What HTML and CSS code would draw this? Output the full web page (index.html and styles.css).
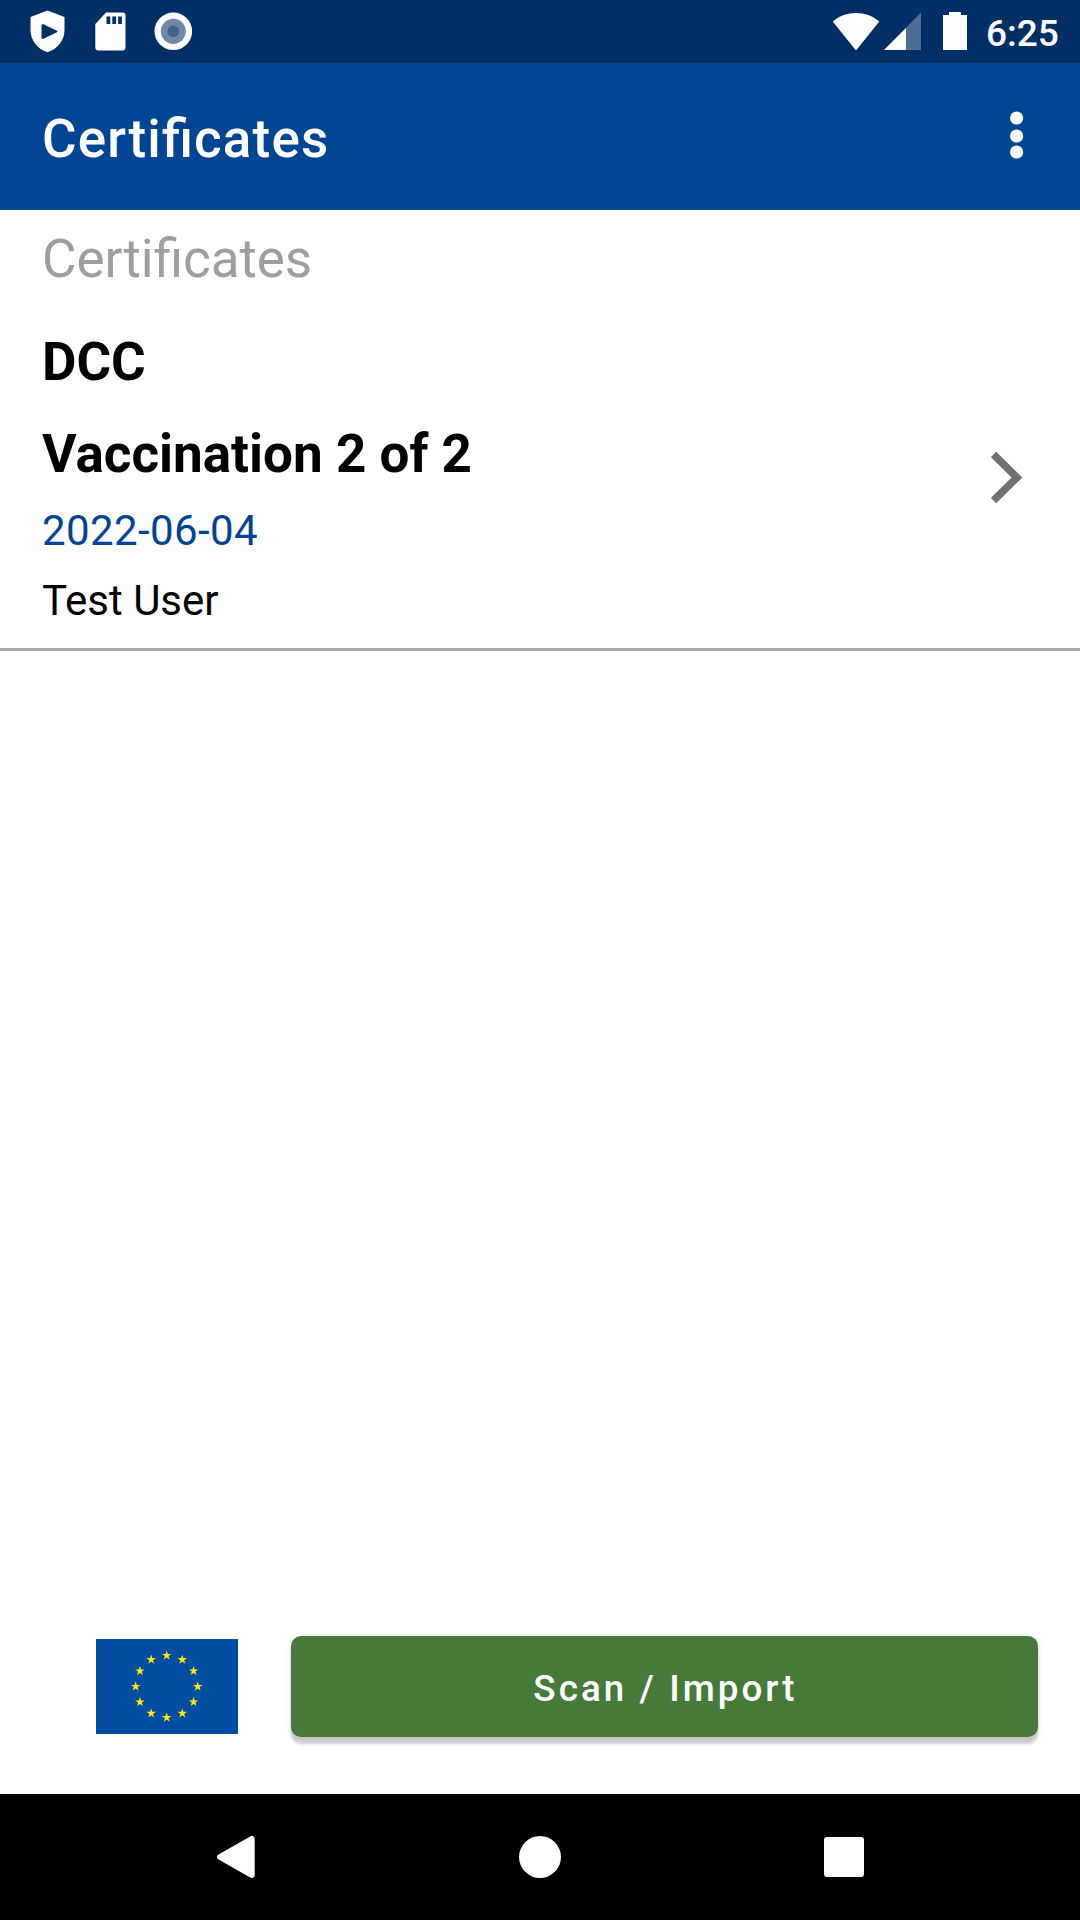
FILE: index.html
```html
<!DOCTYPE html>
<html lang="en">
<head>
<meta charset="utf-8">
<title>Certificates</title>
<link rel="stylesheet" href="styles.css">
</head>
<body>
<div class="screen">
  <header class="status-bar">
    <svg class="status-left" width="200" height="63" viewBox="0 0 200 63" fill="#fff">
      <path fill-rule="evenodd" d="M47.500 10.500L64.500 17V30C64.500 40.500 57.500 49 47.500 52.300C37.500 49 30.500 40.500 30.500 30V17ZM43 24Q41.500 24 41.500 25.500V37.500Q41.500 39 43 39L57 32.300Q58 31.500 57 30.700Z"/>
      <path fill-rule="evenodd" d="M106 12.500H122.500Q125.500 12.500 125.500 15.500V47.500Q125.500 50.500 122.500 50.500H98.500Q95.300 50.500 95.300 47.500V24ZM106.500 16.500V24H110.300V16.500ZM112.300 16.500V24H116.100V16.500ZM118.100 16.500V24H121.900V16.500Z"/>
      <circle cx="173.300" cy="31.300" r="18.800"/>
      <circle cx="173.300" cy="31.300" r="12.500" fill="#6e88a9"/>
      <circle cx="173.300" cy="31.300" r="5.800" fill="#40628d"/>
    </svg>
    <div class="status-right">
      <svg width="140" height="63" viewBox="0 0 140 63" fill="#fff">
        <path d="M4.700 21.500C18 10.300 38 10.300 51.300 21.500L28 50.500Z"/>
        <path d="M93 12.500V50H56Z" fill="#4d6e95"/>
        <path d="M78 28V50H56Z"/>
        <path d="M121 12H133V15H139V50H115V15H121Z"/>
      </svg>
      <span class="clock">6:25</span>
    </div>
  </header>
  <div class="app-bar">
    <h1 class="app-title">Certificates</h1>
    <svg class="menu" width="14" height="50" viewBox="0 0 14 50" fill="#fff">
      <circle cx="6.600" cy="7" r="6.600"/>
      <circle cx="6.600" cy="25" r="6.600"/>
      <circle cx="6.600" cy="41" r="6.600"/>
    </svg>
  </div>
  <main class="content">
    <h2 class="section">Certificates</h2>
    <article class="certificate">
      <div class="details">
        <div class="heading">DCC</div>
        <div class="heading dose">Vaccination 2 of 2</div>
        <div class="line date">2022-06-04</div>
        <div class="line name">Test User</div>
      </div>
      <svg class="chevron" width="34" height="54" viewBox="0 0 34 54">
        <path d="M2.500 3.500L26 26.500L2.500 49.500" fill="none" stroke="#717171" stroke-width="7.600"/>
      </svg>
    </article>
  </main>
  <footer class="actions">
    <svg class="flag" width="142" height="95" viewBox="0 0 142 95">
      <defs><path id="star" fill="#ffed00" d="M0 -5L1.120 -1.540H4.760L1.820 .590L2.940 4.050L0 1.910L-2.940 4.050L-1.820 .590L-4.760 -1.540H-1.120Z"/></defs>
      <rect width="142" height="95" fill="#034ea2"/>
      <use href="#star" x="70.700" y="16.500"/>
      <use href="#star" x="86.300" y="20.600"/>
      <use href="#star" x="97.600" y="32"/>
      <use href="#star" x="101.700" y="47.500"/>
      <use href="#star" x="97.600" y="63"/>
      <use href="#star" x="86.300" y="74.400"/>
      <use href="#star" x="70.700" y="78.600"/>
      <use href="#star" x="55.200" y="74.400"/>
      <use href="#star" x="43.900" y="63"/>
      <use href="#star" x="39.700" y="47.500"/>
      <use href="#star" x="43.900" y="32"/>
      <use href="#star" x="55.200" y="20.600"/>
    </svg>
    <button class="scan" type="button">Scan / Import</button>
  </footer>
  <nav class="nav-bar">
    <svg width="39" height="44" viewBox="0 0 39 44"><path d="M3 22L34.700 4V40Z" fill="#fff" stroke="#fff" stroke-width="6" stroke-linejoin="round"/></svg>
    <svg width="42" height="42" viewBox="0 0 42 42"><circle cx="21" cy="21" r="21" fill="#fff"/></svg>
    <svg width="40" height="40" viewBox="0 0 40 40"><rect width="40" height="40" rx="3" fill="#fff"/></svg>
  </nav>
</div>
</body>
</html>
```
FILE: styles.css
```css
* { box-sizing: border-box; }
body { margin: 0; font-family: Roboto, sans-serif; background: #fff; }
svg { display: block; flex: none; }
h1, h2 { margin: 0; }

.screen { width: 1080px; height: 1920px; display: flex; flex-direction: column; background: #fff; }

.status-bar { height: 63px; display: flex; justify-content: space-between; background: #002f66; }
.status-right { width: 252px; display: flex; padding-right: 12px; }
.clock { width: 100px; padding-left: 18px; font-size: 37px; font-weight: 500; line-height: 67px; color: #fff; white-space: nowrap; }

.app-bar { height: 147px; padding: 0 56px 0 42px; display: flex; align-items: center; justify-content: space-between; background: #004494; color: #fff; }
.app-title { font-size: 53px; font-weight: 500; line-height: 62px; padding-top: 4px; letter-spacing: 1.15px; font-feature-settings: "liga" 1; }
.menu { margin-top: -1px; }

.content { flex: 1; padding-top: 18px; }
.section { padding-left: 42px; font-size: 53px; font-weight: 400; line-height: 62px; letter-spacing: -0.08px; font-feature-settings: "liga" 1; color: #9e9e9e; }
.certificate { height: 361px; padding: 41px 55px 0 42px; display: flex; justify-content: space-between; border-bottom: 3px solid #a9a9a9; }
.heading { font-size: 53px; font-weight: 700; line-height: 62px; color: #000; }
.dose { margin-top: 30px; }
.line { font-size: 42px; line-height: 50px; }
.date { margin-top: 21px; color: #004494; letter-spacing: 0.4px; }
.name { margin-top: 20px; color: #000; }
.chevron { margin-top: 120px; }

.actions { height: 158px; padding: 0 42px 0 96px; display: flex; align-items: flex-start; gap: 53px; }
.flag { margin-top: 3px; }
.scan { flex: 1; height: 101px; padding: 4px 0 0 2px; border: 0; border-radius: 10px; background: #467a39; color: #fff; font: 500 36.750px/44px Roboto, sans-serif; letter-spacing: 3.070px; box-shadow: 0 7px 3px rgba(0, 0, 0, .19), 0 1px 6px rgba(0, 0, 0, .1); }

.nav-bar { height: 126px; padding: 0 216px 0 217px; display: flex; align-items: center; justify-content: space-between; background: #000; }
```
